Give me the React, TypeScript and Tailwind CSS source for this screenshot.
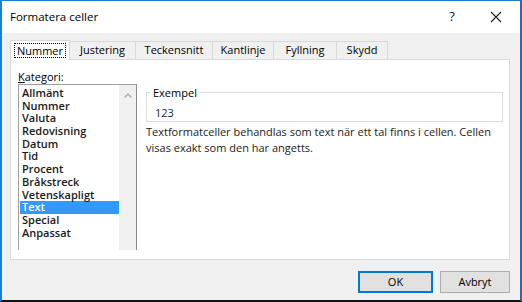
import React from 'react';

const tabs = [
  { label: 'Justering', cls: 'w-[67px]' },
  { label: 'Teckensnitt', cls: 'w-[78px]' },
  { label: 'Kantlinje', cls: 'w-[62px]' },
  { label: 'Fyllning', cls: 'w-[64px]' },
  { label: 'Skydd', cls: 'w-[52px]' },
];

const categories = [
  'Allmänt', 'Nummer', 'Valuta', 'Redovisning', 'Datum', 'Tid',
  'Procent', 'Bråkstreck', 'Vetenskapligt', 'Text', 'Special', 'Anpassat',
];

export default function App() {
  return (
    <div className="w-[522px] h-[302px] flex flex-col border-l-2 border-t border-r-2 border-b-2 border-l-[#1a7fd4] border-t-[#1a7fd4] border-r-[#1a6fc0] border-b-[#141414] bg-[#f0f0f0] font-['Open_Sans',sans-serif] text-[11px] text-black">
      {/* title bar */}
      <div className="h-[32px] shrink-0 bg-white flex items-center pl-[8px]">
        <span className="text-[11.5px]">Formatera celler</span>
        <span className="ml-auto w-[20px] text-center text-[13px] text-[#222]">?</span>
        <svg className="ml-[28px] mr-[18px]" width="12" height="12" viewBox="0 0 12 12">
          <path d="M1 1 L11 11 M11 1 L1 11" stroke="#222" strokeWidth="1.1" />
        </svg>
      </div>

      <div className="flex-1 flex flex-col pl-[8px] pr-[10px] pt-[7px]">
        {/* tabs */}
        <div className="relative z-10 -mb-px flex items-end h-[20px]">
          <div className="w-[60px] h-[20px] bg-white border border-b-0 border-[#d9d9d9] flex items-center justify-center">
            <span className="border border-dotted border-black px-[2px] leading-[13px]">Nummer</span>
          </div>
          {tabs.map(t => (
            <div
              key={t.label}
              className={`${t.cls} -ml-px h-[18px] mb-px bg-[#f0f0f0] border border-b-0 border-[#d9d9d9] flex items-center justify-center`}
            >
              {t.label}
            </div>
          ))}
        </div>

        {/* panel */}
        <div className="h-[201px] bg-white border border-[#d9d9d9] flex pl-[7px] pt-[10px]">
          <div className="w-[119px] flex flex-col">
            <div className="h-[14px] leading-[14px] font-medium">
              <span className="underline underline-offset-1">K</span>ategori:
            </div>
            <div className="h-[166px] flex border-l border-t border-r border-[#a0a0a0] border-r-[#8a8a8a]">
              <div className="flex-1 pl-[1px] pt-[2px]">
                {categories.map(c => (
                  <div
                    key={c}
                    className={`h-[12.7px] leading-[12.7px] pl-[2px] font-[550] whitespace-nowrap ${
                      c === 'Text' ? 'bg-[#3399ff] text-white' : 'text-[#1a1a1a]'
                    }`}
                  >
                    {c}
                  </div>
                ))}
              </div>
              <div className="w-[17px] bg-[#f0f0f0] flex flex-col">
                <div className="h-[20px] flex items-center justify-center">
                  <svg width="8" height="5" viewBox="0 0 8 5">
                    <path d="M0.5 4.5 L4 1 L7.5 4.5" stroke="#a6a6a6" strokeWidth="1.2" fill="none" />
                  </svg>
                </div>
              </div>
            </div>
          </div>

          <div className="ml-[9px] mt-[22px] w-[357px] flex flex-col">
            <div className="relative h-[30px] border border-[#dcdcdc] pl-[8px] pt-[12px]">
              <span className="absolute left-[4px] -top-[7px] bg-white px-[2px] leading-[14px] font-medium">Exempel</span>
              <span className="leading-[14px] font-medium text-[#1c1c40]">123</span>
            </div>
            <p className="mt-[2px] leading-[16px] text-[#222]">
              Textformatceller behandlas som text när ett tal finns i cellen. Cellen
              <br />
              visas exakt som den har angetts.
            </p>
          </div>
        </div>

        {/* buttons */}
        <div className="mt-[11px] h-[22px] flex justify-end gap-[7px]">
          <button className="w-[75px] h-[22px] bg-[#e1e1e1] border-2 border-[#0078d7] text-[11px] font-medium">OK</button>
          <button className="w-[70px] h-[22px] bg-[#e1e1e1] border border-[#adadad] text-[11px] font-medium">Avbryt</button>
        </div>
      </div>
    </div>
  );
}
